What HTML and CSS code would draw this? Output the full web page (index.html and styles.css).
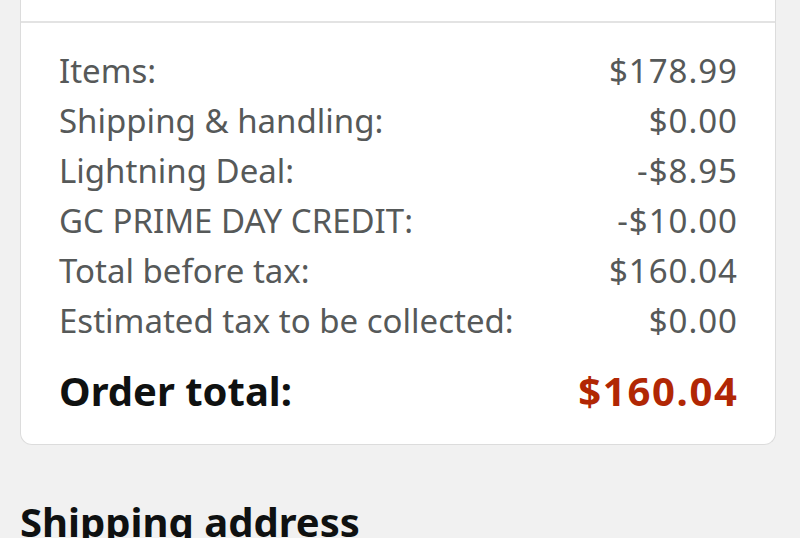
FILE: index.html
```html
<!DOCTYPE html>
<html>
<head>
<meta charset="utf-8">
<link rel="stylesheet" href="styles.css">
</head>
<body>
<div class="card">
  <div class="card-top"></div>
  <div class="summary">
    <div class="row"><span>Items:</span><span class="num">$178.99</span></div>
    <div class="row"><span>Shipping &amp; handling:</span><span class="num">$0.00</span></div>
    <div class="row"><span>Lightning Deal:</span><span class="num">-$8.95</span></div>
    <div class="row"><span>GC PRIME DAY CREDIT:</span><span class="num">-$10.00</span></div>
    <div class="row"><span>Total before tax:</span><span class="num">$160.04</span></div>
    <div class="row"><span>Estimated tax to be collected:</span><span class="num">$0.00</span></div>
    <div class="row total"><span>Order total:</span><span class="num price">$160.04</span></div>
  </div>
</div>
<h2 class="section-title">Shipping address</h2>
</body>
</html>
```

FILE: styles.css
```css
html, body {
  margin: 0;
  padding: 0;
}
body {
  background: #f1f1f1;
  font-family: "Noto Sans", sans-serif;
  width: 800px;
  height: 538px;
  overflow: hidden;
}
.card {
  margin: 0 24px 0 20px;
  background: #fff;
  border: 1px solid #dcdcdc;
  border-top: none;
  border-radius: 0 0 12px 12px;
}
.card-top {
  height: 21px;
  border-bottom: 2px solid #e3e3e3;
}
.summary {
  padding: 23px 38px 28px 38px;
}
.row {
  display: flex;
  justify-content: space-between;
  font-size: 33px;
  line-height: 50px;
  color: #565959;
}
.num {
  letter-spacing: 1px;
  margin-right: -1px;
}
.row.total {
  margin-top: 20px;
  font-size: 40px;
  font-weight: 700;
  color: #0f1111;
}
.row.total .num {
  letter-spacing: 1.7px;
  margin-right: -1.7px;
}
.price {
  color: #b12704;
}
.section-title {
  margin: 52px 0 0 20px;
  font-size: 40px;
  font-weight: 700;
  color: #0f1111;
  line-height: 50px;
}
```
